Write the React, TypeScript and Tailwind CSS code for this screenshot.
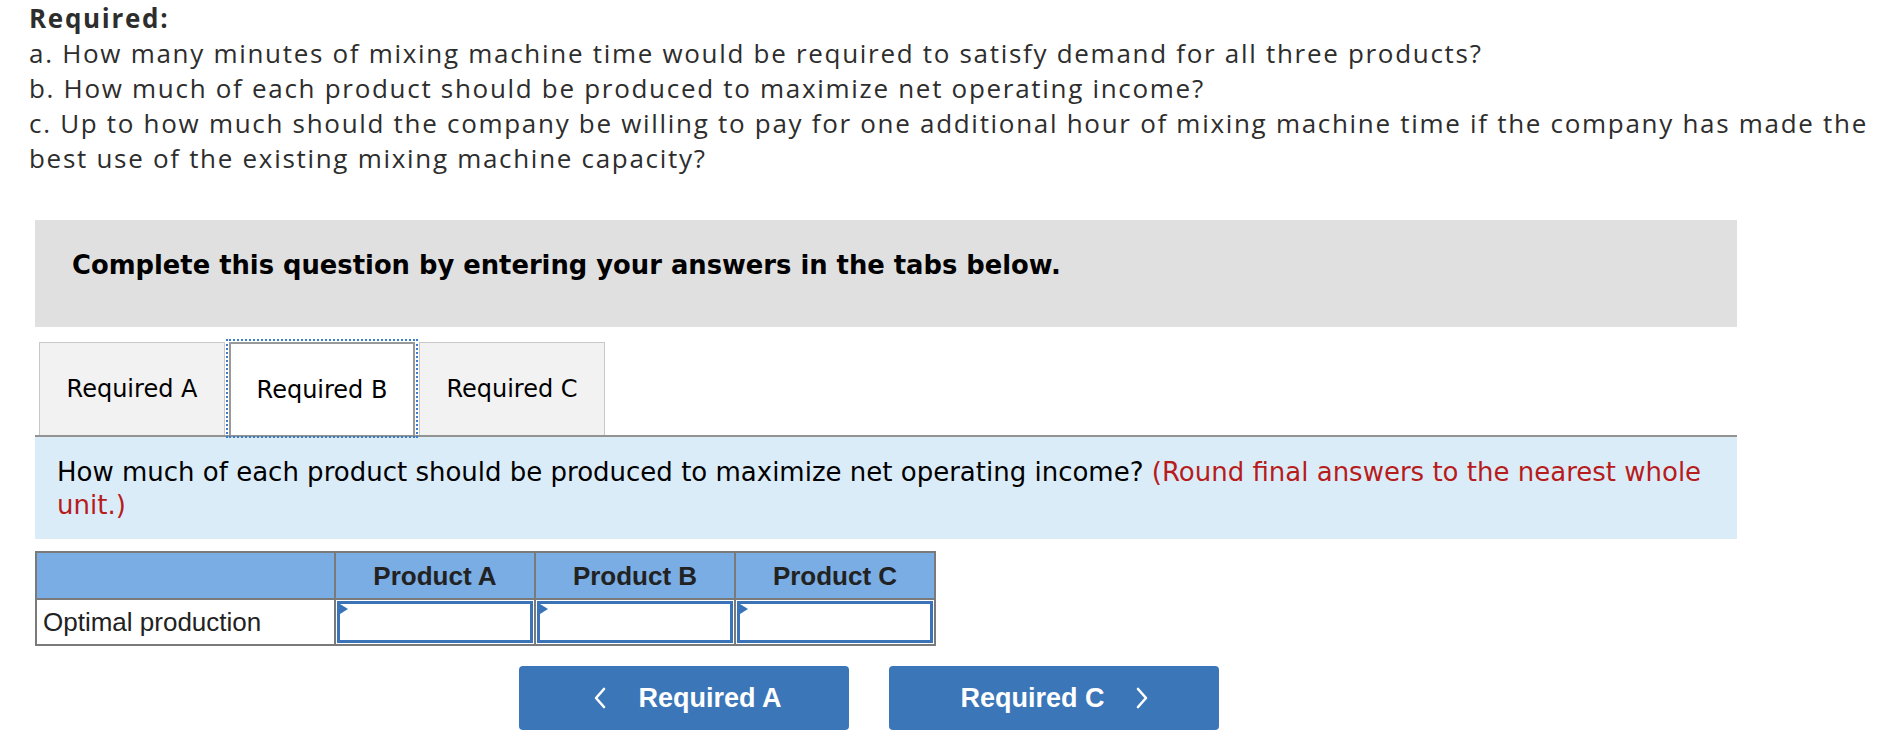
import { useState } from 'react'

const tabs = ['Required A', 'Required B', 'Required C']
const products = ['Product A', 'Product B', 'Product C']

function Chevron({ dir }: { dir: 'left' | 'right' }) {
  return (
    <svg width="12" height="22" viewBox="0 0 12 22" fill="none" className="shrink-0">
      <polyline
        points={dir === 'left' ? '10,2 2,11 10,20' : '2,2 10,11 2,20'}
        stroke="white"
        strokeWidth="2.6"
        strokeLinecap="round"
        strokeLinejoin="round"
      />
    </svg>
  )
}

function AnswerCell() {
  return (
    <td className="border-2 border-[#7a7a7a] p-px h-[46px]">
      <div className="relative h-[42px] border-[3px] border-[#3a73b8] bg-white">
        <span className="absolute left-0 top-0 w-0 h-0 border-y-[5px] border-y-transparent border-l-[8px] border-l-[#3a73b8]" />
        <input className="w-full h-full outline-none bg-transparent px-2 text-[22px]" />
      </div>
    </td>
  )
}

export default function App() {
  const [active, setActive] = useState(1)

  return (
    <div className="w-full h-[756px] bg-white overflow-hidden">
      {/* question text */}
      <div className="pl-[29px] pt-[1px] text-[26px] leading-[35px] tracking-[1.7px] text-[#2d2d2d] font-['Open_Sans',sans-serif]">
        <p className="font-bold">Required:</p>
        <p>a. How many minutes of mixing machine time would be required to satisfy demand for all three products?</p>
        <p>b. How much of each product should be produced to maximize net operating income?</p>
        <p>
          c. Up to how much should the company be willing to pay for one additional hour of mixing machine time if the
          company has made the best use of the existing mixing machine capacity?
        </p>
      </div>

      {/* banner */}
      <div className="ml-[35px] mt-[44px] w-[1702px] h-[107px] bg-[#e0e0e0] flex items-center pl-[37px] pb-[16px]">
        <p className="font-['DejaVu_Sans','Verdana',sans-serif] font-bold text-[25.8px] text-black">
          Complete this question by entering your answers in the tabs below.
        </p>
      </div>

      {/* tabs */}
      <div className="ml-[35px] mt-[15px] w-[1702px] border-b-2 border-[#939393] pl-[4px] flex gap-[4px] font-['DejaVu_Sans','Verdana',sans-serif] text-[24px]">
        {tabs.map((t, i) => (
          <button
            key={t}
            onClick={() => setActive(i)}
            className={`w-[186px] h-[93px] flex items-center justify-center border border-b-0 ${
              i === active
                ? 'bg-white border-[#999] border-2 outline-2 outline-dotted outline-[#3b7bc8] outline-offset-[1px] z-10'
                : 'bg-[#f2f2f2] border-[#c8c8c8]'
            }`}
          >
            {t}
          </button>
        ))}
      </div>

      {/* instruction */}
      <div className="ml-[35px] w-[1702px] h-[102px] bg-[#dbecf9] pl-[22px] pr-[10px] pt-[19px] font-['DejaVu_Sans','Verdana',sans-serif] text-[26px] leading-[33px] text-black">
        How much of each product should be produced to maximize net operating income?{' '}
        <span className="text-[#b71c1c]">(Round final answers to the nearest whole unit.)</span>
      </div>

      {/* answer table */}
      <table className="ml-[35px] mt-[12px] border-collapse font-['Liberation_Sans','Arial',sans-serif] text-[26px] leading-[30px] text-[#222]">
        <thead>
          <tr className="bg-[#79ade3]">
            <th className="w-[299px] h-[47px] p-0 border-2 border-[#7a7a7a]" />
            {products.map((p) => (
              <th key={p} className="w-[200px] h-[47px] p-0 border-2 border-[#7a7a7a] font-bold">
                {p}
              </th>
            ))}
          </tr>
        </thead>
        <tbody>
          <tr>
            <td className="border-2 border-[#7a7a7a] px-[6px] py-0 text-left font-normal">Optimal production</td>
            <AnswerCell />
            <AnswerCell />
            <AnswerCell />
          </tr>
        </tbody>
      </table>

      {/* nav buttons */}
      <div className="ml-[519px] mt-[20px] flex gap-[40px] font-['Liberation_Sans','Arial',sans-serif] font-bold text-[27px] text-white">
        <button className="w-[330px] h-[64px] rounded-[4px] bg-[#3b76b9] flex items-center justify-center gap-[32px] pl-[8px]">
          <Chevron dir="left" />
          <span>Required A</span>
        </button>
        <button className="w-[330px] h-[64px] rounded-[4px] bg-[#3b76b9] flex items-center justify-center gap-[31px]">
          <span>Required C</span>
          <Chevron dir="right" />
        </button>
      </div>
    </div>
  )
}
